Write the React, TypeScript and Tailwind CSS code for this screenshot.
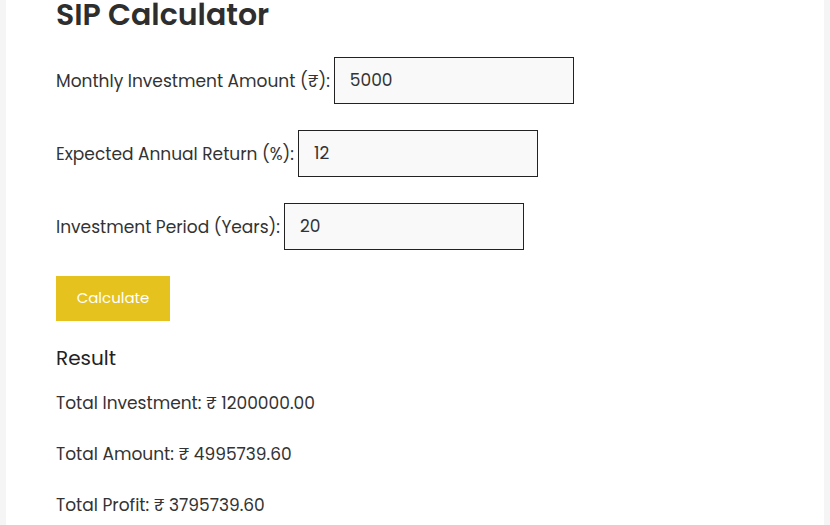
import React from "react";

const rows = [
  { label: "Monthly Investment Amount (₹):", value: "5000" },
  { label: "Expected Annual Return (%):", value: "12" },
  { label: "Investment Period (Years):", value: "20" },
];

export default function App() {
  return (
    <div
      className="w-[830px] h-[525px] overflow-hidden bg-[#f5f5f5] px-[6px]"
      style={{ fontFamily: '"Poppins", "Inter", "Noto Sans", sans-serif' }}
    >
      <div className="h-full bg-white px-[50px] text-[#333333]">
        <h2 className="text-[30px] font-semibold leading-[30px] pt-0 text-[#2e2e2e]">SIP Calculator</h2>
        <div className="mt-[27px] flex flex-col gap-[26px]">
          {rows.map((r) => (
            <div key={r.label} className="flex items-center gap-[4px]">
              <span className="text-[17px] leading-[24px]">{r.label}</span>
              <div className="w-[240px] h-[47px] border border-[#222] bg-[#f9f9f9] pl-[15px] flex items-center text-[17px]">
                {r.value}
              </div>
            </div>
          ))}
        </div>
        <button className="mt-[26px] w-[114px] h-[45px] bg-[#e6c21e] text-white text-[15px] block">
          Calculate
        </button>
        <h3 className="mt-[24px] text-[20px] leading-[26px] text-[#222]">Result</h3>
        <div className="mt-[20px] flex flex-col gap-[27px] text-[17px] leading-[24px]">
          <p>Total Investment: ₹ 1200000.00</p>
          <p>Total Amount: ₹ 4995739.60</p>
          <p>Total Profit: ₹ 3795739.60</p>
        </div>
      </div>
    </div>
  );
}
